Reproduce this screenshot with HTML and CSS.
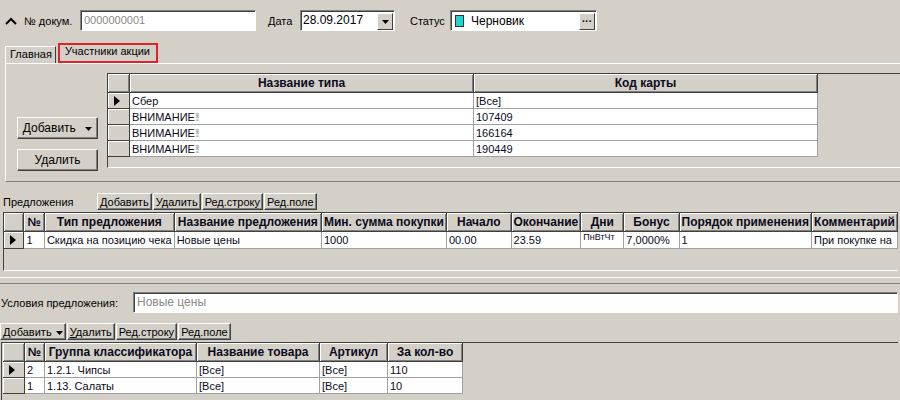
FILE: index.html
```html
<!DOCTYPE html>
<html lang="ru">
<head>
    <meta charset="UTF-8">
    <title>Акция</title>
    <link rel="stylesheet" href="styles.css">
</head>
<body>
<div class="window">

    <!-- Шапка документа -->
    <div class="top">
        <svg class="collapse" width="12" height="8" viewBox="0 0 12 8"><polyline points="1,7 6,2 11,7" fill="none" stroke="#000" stroke-width="2"/></svg>
        <span class="lbl doc-lbl">№ докум.</span>
        <div class="field doc-field">0000000001</div>
        <span class="lbl date-lbl">Дата</span>
        <div class="field date-field">28.09.2017<span class="combo-btn"><svg width="7" height="4" viewBox="0 0 7 4"><polygon points="0,0 7,0 3.5,4" fill="#000"/></svg></span></div>
        <span class="lbl status-lbl">Статус</span>
        <div class="field status-field"><span class="status-color"></span>Черновик<span class="dots-btn">···</span></div>
    </div>

    <div class="tabs">
        <div class="tab">Главная</div>
        <div class="tab active">Участники акции</div>
    </div>

    <div class="panel">
        <div class="side">
            <button class="btn big add-btn"><u>Д</u>обавить <svg width="7" height="4" viewBox="0 0 7 4"><polygon points="0,0 7,0 3.5,4" fill="#000"/></svg></button>
            <button class="btn big del-btn">Удалить</button>
        </div>
        <div class="grid-box grid-members">
            <table class="grid">
                <colgroup><col style="width:22px"><col style="width:344px"><col style="width:344px"></colgroup>
                <tr><th></th><th>Название типа</th><th>Код карты</th></tr>
                <tr><td class="ind"><span class="arrow"></span></td><td>Сбер</td><td>[Все]</td></tr>
                <tr><td class="ind"></td><td>ВНИМАНИЕ<span class="bang">!!!</span></td><td>107409</td></tr>
                <tr><td class="ind"></td><td>ВНИМАНИЕ<span class="bang">!!!</span></td><td>166164</td></tr>
                <tr><td class="ind"></td><td>ВНИМАНИЕ<span class="bang">!!!</span></td><td>190449</td></tr>
            </table>
        </div>
    </div>

    <!-- Предложения -->
    <div class="offers">
        <div class="toolbar">
            <span class="lbl offers-lbl">Предложения</span>
            <button class="btn small">Добавить</button>
            <button class="btn small">Удалить</button>
            <button class="btn small">Ред.строку</button>
            <button class="btn small">Ред.поле</button>
        </div>
        <div class="grid-box grid-offers">
            <table class="grid">
                <colgroup>
                    <col style="width:22px"><col style="width:21px"><col style="width:126px"><col style="width:148px">
                    <col style="width:124px"><col style="width:69px"><col style="width:68px"><col style="width:45px">
                    <col style="width:57px"><col style="width:128px"><col style="width:86px">
                </colgroup>
                <tr><th></th><th>№</th><th>Тип предложения</th><th>Название предложения</th><th>Мин. сумма покупки</th><th>Начало</th><th>Окончание</th><th>Дни</th><th>Бонус</th><th>Порядок применения</th><th>Комментарий</th></tr>
                <tr><td class="ind"><span class="arrow"></span></td><td>1</td><td>Скидка на позицию чека</td><td>Новые цены</td><td>1000</td><td>00.00</td><td>23.59</td><td class="days">ПнВтЧт</td><td>7,0000%</td><td>1</td><td>При покупке на</td></tr>
            </table>
        </div>
    </div>

    <div class="splitter"></div>

    <!-- Условия -->
    <div class="conditions">
        <span class="lbl cond-lbl">Условия предложения:</span>
        <div class="field cond-field">Новые цены</div>
    </div>

    <div class="toolbar cond-toolbar">
        <button class="btn small"><u>Д</u>обавить <svg width="7" height="4" viewBox="0 0 7 4"><polygon points="0,0 7,0 3.5,4" fill="#000"/></svg></button>
        <button class="btn small"><u>У</u>далить</button>
        <button class="btn small">Ред.строку</button>
        <button class="btn small">Ред.поле</button>
    </div>

    <div class="grid-box grid-goods">
        <table class="grid">
            <colgroup>
                <col style="width:22px"><col style="width:20px"><col style="width:152px"><col style="width:123px"><col style="width:68px"><col style="width:75px">
            </colgroup>
            <tr><th></th><th>№</th><th>Группа классификатора</th><th>Название товара</th><th>Артикул</th><th>За кол-во</th></tr>
            <tr><td class="ind"><span class="arrow"></span></td><td>2</td><td>1.2.1. Чипсы</td><td>[Все]</td><td>[Все]</td><td>110</td></tr>
            <tr><td class="ind"></td><td>1</td><td>1.13. Салаты</td><td>[Все]</td><td>[Все]</td><td>10</td></tr>
        </table>
    </div>

</div>
</body>
</html>
```

FILE: styles.css
```css
body {
    margin: 0;
    background-color: #d4d0c8;
    font-family: "Liberation Sans", Arial, sans-serif;
    font-size: 11px;
    color: #000;
}

.window {
    width: 900px;
    height: 400px;
    overflow: hidden;
}

.lbl {
    white-space: nowrap;
    flex-shrink: 0;
}

/* шапка */
.top {
    display: flex;
    align-items: center;
    height: 21px;
    padding-top: 10px;
    padding-bottom: 12px;
}

.collapse {
    margin-left: 5px;
}

.doc-lbl {
    width: 56px;
    margin-left: 7px;
}

.field {
    position: relative;
    height: 21px;
    box-sizing: border-box;
    background-color: #fff;
    border-top: 1px solid #808080;
    border-left: 1px solid #808080;
    border-right: 1px solid #fff;
    border-bottom: 1px solid #fff;
    box-shadow: inset 1px 1px 0 #404040;
    padding: 3px 0 0 3px;
    white-space: nowrap;
    flex-shrink: 0;
}

.doc-field {
    width: 176px;
    color: #8a8a8a;
}

.date-lbl {
    width: 32px;
    margin-left: 12px;
}

.date-field {
    width: 95px;
    padding-left: 2px;
    font-size: 12px;
    padding-top: 2px;
}

.combo-btn, .dots-btn {
    position: absolute;
    top: 2px;
    right: 1px;
    width: 14px;
    height: 15px;
    background-color: #d4d0c8;
    border: 1px solid;
    border-color: #fff #404040 #404040 #fff;
    display: flex;
    align-items: center;
    justify-content: center;
}

.dots-btn {
    font-size: 10px;
    font-weight: bold;
    line-height: 1;
}

.status-lbl {
    width: 40px;
    margin-left: 15px;
}

.status-field {
    width: 147px;
    display: flex;
    align-items: center;
    padding-top: 0;
    padding-left: 4px;
    font-size: 12px;
}

.status-color {
    width: 7px;
    height: 10px;
    background-color: #1fd3d3;
    border: 1px solid #333;
    margin-right: 7px;
}

/* вкладки */
.tabs {
    display: flex;
    align-items: flex-end;
    height: 20px;
    padding-left: 5px;
}

.tab {
    height: 15px;
    padding: 1px 3px 0 4px;
    border-top: 1px solid #fff;
    border-left: 1px solid #fff;
    border-right: 1px solid #404040;
    white-space: nowrap;
}

.tab.active {
    height: 16px;
    margin-left: 2px;
    padding: 0 6px 0 5px;
    border: 2px solid #e0242b;
}

.panel {
    display: flex;
    height: 119px;
    box-sizing: border-box;
    margin-left: 5px;
    padding-top: 9px;
    border-top: 1px solid #fff;
    border-left: 1px solid #fff;
    border-bottom: 1px solid #808080;
}

.side {
    width: 101px;
    flex-shrink: 0;
}

.btn {
    background-color: #d4d0c8;
    border: 1px solid;
    border-color: #fff #404040 #404040 #fff;
    box-shadow: inset -1px -1px 0 #808080;
    font-family: "Liberation Sans", Arial, sans-serif;
    font-size: 11px;
    color: #000;
    padding: 0 3px;
    white-space: nowrap;
}

.btn.big {
    display: block;
    width: 81px;
    height: 22px;
    margin-left: 11px;
    font-size: 12px;
}

.add-btn svg {
    margin-left: 6px;
    vertical-align: middle;
}

.add-btn {
    margin-top: 44px;
}

.del-btn {
    margin-top: 10px;
}

/* таблицы */
.grid-box {
    box-sizing: border-box;
    background-color: #d4d0c8;
    border-top: 1px solid #404040;
    border-left: 1px solid #404040;
    border-bottom: 1px solid #fff;
    overflow: hidden;
}

.grid-members {
    flex: 1;
    height: 95px;
}

.grid {
    border-collapse: separate;
    border-spacing: 0;
    table-layout: fixed;
    font-size: 11px;
    color: #0a0a20;
}

.grid th, .grid td {
    box-sizing: border-box;
    padding: 0 2px;
    white-space: nowrap;
    overflow: hidden;
    text-align: left;
}

.grid th {
    height: 19px;
    font-weight: bold;
    font-size: 12px;
    text-align: center;
    background-color: #d4d0c8;
    border-right: 1px solid #404040;
    border-bottom: 1px solid #404040;
    box-shadow: inset 1px 1px 0 #fff, inset -1px -1px 0 #808080;
}

.grid td {
    height: 16px;
    background-color: #fff;
    border-right: 1px solid #a0a0a0;
    border-bottom: 1px solid #a0a0a0;
}

.grid td.ind {
    background-color: #d4d0c8;
    border-right: 1px solid #404040;
    border-bottom: 1px solid #404040;
    box-shadow: inset 1px 1px 0 #fff;
    padding-left: 6px;
}

.arrow {
    display: block;
    width: 0;
    height: 0;
    border-top: 5px solid transparent;
    border-bottom: 5px solid transparent;
    border-left: 6px solid #000;
}

.bang {
    color: #bdbdbd;
    font-size: 10px;
    font-weight: bold;
    letter-spacing: -2.5px;
}

.grid td.days {
    font-size: 9px;
    vertical-align: top;
}

/* предложения */
.toolbar {
    display: flex;
    align-items: center;
}

.offers .toolbar {
    height: 17px;
    margin-top: 11px;
}

.offers-lbl {
    width: 94px;
    padding-left: 3px;
}

.btn.small {
    height: 17px;
    padding: 0 2px;
    margin-right: 1px;
}

.grid-offers {
    height: 59px;
    margin: 2px 2px 0 3px;
}

.grid-offers .grid td {
    height: 17px;
}

.splitter {
    height: 5px;
    margin-top: 6px;
    border-top: 1px solid #fff;
    border-bottom: 1px solid #808080;
}

.conditions {
    display: flex;
    align-items: center;
    margin-top: 8px;
    padding-left: 1px;
}

.cond-lbl {
    width: 132px;
}

.cond-field {
    flex: 1;
    margin-right: 2px;
    color: #8a8a8a;
    font-size: 12px;
    padding-top: 2px;
}

.cond-toolbar {
    height: 17px;
    margin-top: 10px;
}

.cond-toolbar svg {
    vertical-align: middle;
    margin-left: 1px;
}

.grid-goods {
    height: 60px;
    margin: 2px 2px 0 1px;
}

.grid-goods .grid {
    margin-left: 1px;
}
```
